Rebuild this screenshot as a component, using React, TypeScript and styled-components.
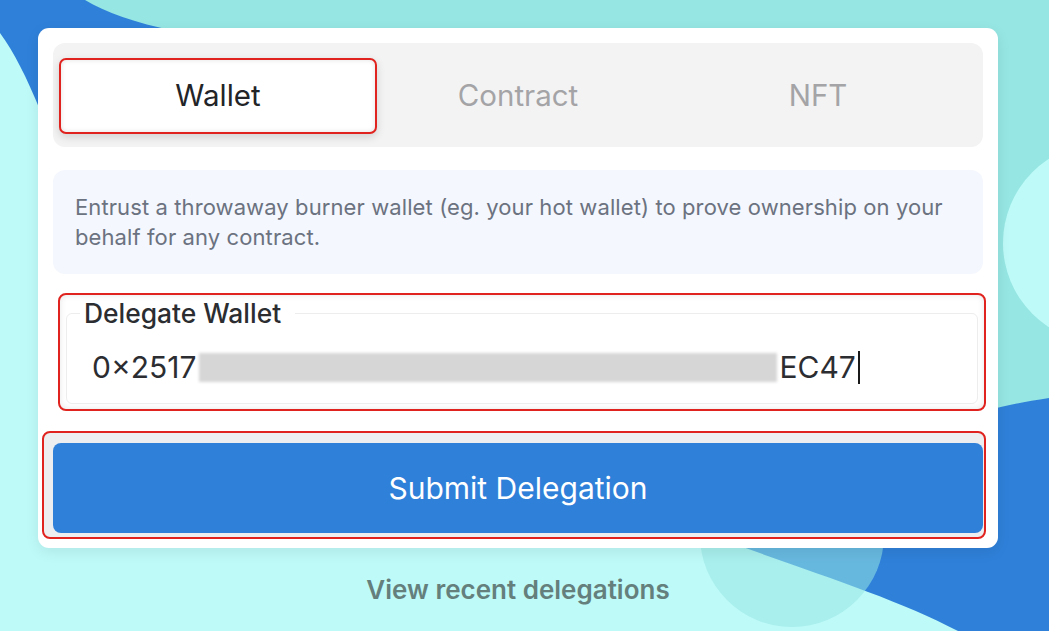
import styled, {createGlobalStyle} from "styled-components";

const tabs = ["Wallet", "Contract", "NFT"];

export default function App() {
    const active = "Wallet";

    return (
        <Page>
            <GlobalStyle/>
            <Backdrop viewBox="0 0 1049 631" preserveAspectRatio="none" aria-hidden>
                <path d="M60 0 L1049 0 L1049 430 L700 530 L180 260 Z" fill="#96e6e3"/>
                <path
                    d="M0 0 L85 0 C105 12 135 23 175 31 L175 130 L40 110 C27 78 14 52 0 33 Z"
                    fill="#2f80d9"
                />
                <circle cx="1103" cy="243" r="100" fill="#befaf8"/>
                <path
                    d="M1049 398 C1010 404 985 410 960 420 L640 520 L740 546 C820 575 900 600 958 631 L1049 631 Z"
                    fill="#2f80d9"
                />
                <circle cx="792" cy="535" r="92" fill="#96e6e3" fillOpacity="0.55"/>
            </Backdrop>

            <Content>
                <Card>
                    <TabBar>
                        {tabs.map((tab) => (
                            <Tab key={tab} $active={tab === active}>
                                {tab}
                            </Tab>
                        ))}
                    </TabBar>

                    <Description>
                        Entrust a throwaway burner wallet (eg. your hot wallet) to prove ownership on your
                        behalf for any contract.
                    </Description>

                    <FieldFrame>
                        <Fieldset>
                            <Legend>Delegate Wallet</Legend>
                            <AddressLine>
                                0×2517
                                <Redacted/>
                                EC47
                                <Caret/>
                            </AddressLine>
                        </Fieldset>
                    </FieldFrame>

                    <ButtonFrame>
                        <SubmitButton type="button">Submit Delegation</SubmitButton>
                    </ButtonFrame>
                </Card>

                <RecentLink href="#">View recent delegations</RecentLink>
            </Content>
        </Page>
    );
}

const GlobalStyle = createGlobalStyle`
    html, body {
        margin: 0;
        padding: 0;
        background: #befaf8;
    }

    * {
        box-sizing: border-box;
    }
`;

const Page = styled.main`
    position: relative;
    width: 100%;
    height: 100vh;
    overflow: hidden;
    font-family: Inter, "Noto Sans", sans-serif;
`;

const Backdrop = styled.svg`
    position: absolute;
    inset: 0;
    width: 100%;
    height: 100%;
`;

const Content = styled.div`
    position: relative;
    width: 960px;
    display: flex;
    flex-direction: column;
    align-items: center;
    margin: 0 0 0 38px;
    padding-top: 28px;
`;

const Card = styled.section`
    width: 960px;
    display: flex;
    flex-direction: column;
    padding: 15px 15px 9px;
    background: #ffffff;
    border-radius: 11px;
    box-shadow: 0 4px 14px rgba(0, 0, 0, 0.08);
`;

const TabBar = styled.div`
    display: grid;
    grid-template-columns: repeat(3, 300px);
    padding: 15px 15px 13px;
    background: #f3f3f4;
    border-radius: 12px;
`;

const Tab = styled.div<{ $active: boolean }>`
    height: 76px;
    display: flex;
    align-items: center;
    justify-content: center;
    padding-bottom: 2px;
    font-size: 29.5px;
    color: ${(p) => (p.$active ? "#222428" : "#a4a4a6")};
    ${(p) =>
        p.$active &&
        `
        margin: 0 -9px;
        background: #ffffff;
        border: 2px solid #e0231f;
        border-radius: 7px;
        box-shadow: 0 3px 8px rgba(0, 0, 0, 0.14), inset 0 0 5px rgba(0, 0, 0, 0.12);
    `}
`;

const Description = styled.p`
    margin: 23px 0 0;
    padding: 22px 22px;
    height: 104px;
    background: #f4f7fd;
    border-radius: 12px;
    font-size: 22px;
    line-height: 30px;
    letter-spacing: 0.1px;
    color: #6b7280;
`;

const FieldFrame = styled.div`
    margin: 19px -3px 0 5px;
    height: 118px;
    padding: 3px 6px 5px;
    border: 2px solid #e0231f;
    border-radius: 8px;
    background: #ffffff;
    box-shadow: inset 0 0 6px rgba(0, 0, 0, 0.1);
`;

const Fieldset = styled.fieldset`
    margin: 0;
    height: 100%;
    padding: 0 25px;
    border: 1px solid #ededed;
    border-radius: 6px;
`;

const Legend = styled.legend`
    margin-left: -12px;
    padding: 0 14px 0 4px;
    font-size: 26.4px;
    line-height: 30px;
    font-weight: 500;
    color: #2b2d31;
`;

const AddressLine = styled.div`
    display: flex;
    align-items: center;
    margin-top: 21px;
    font-size: 30px;
    line-height: 36px;
    color: #2b2d31;
`;

const Redacted = styled.span`
    width: 578px;
    height: 29px;
    margin: 0 3px 0 2px;
    background: #d6d6d6;
    filter: blur(1.5px);
`;

const Caret = styled.span`
    width: 2px;
    height: 33px;
    margin-left: 2px;
    background: #1a1a1a;
`;

const ButtonFrame = styled.div`
    margin: 20px -3px 0 -11px;
    height: 108px;
    padding: 10px 1px 4px 9px;
    border: 2px solid #e0231f;
    border-radius: 8px;
    background: #eceef0;
`;

const SubmitButton = styled.button`
    width: 100%;
    height: 90px;
    border: none;
    border-radius: 8px;
    background: #2f80d9;
    color: #ffffff;
    font-family: Inter, "Noto Sans", sans-serif;
    font-size: 30px;
    cursor: pointer;
`;

const RecentLink = styled.a`
    margin-top: 27px;
    font-size: 26px;
    line-height: 30px;
    font-weight: 600;
    color: #647f7c;
    text-decoration: none;
`;
